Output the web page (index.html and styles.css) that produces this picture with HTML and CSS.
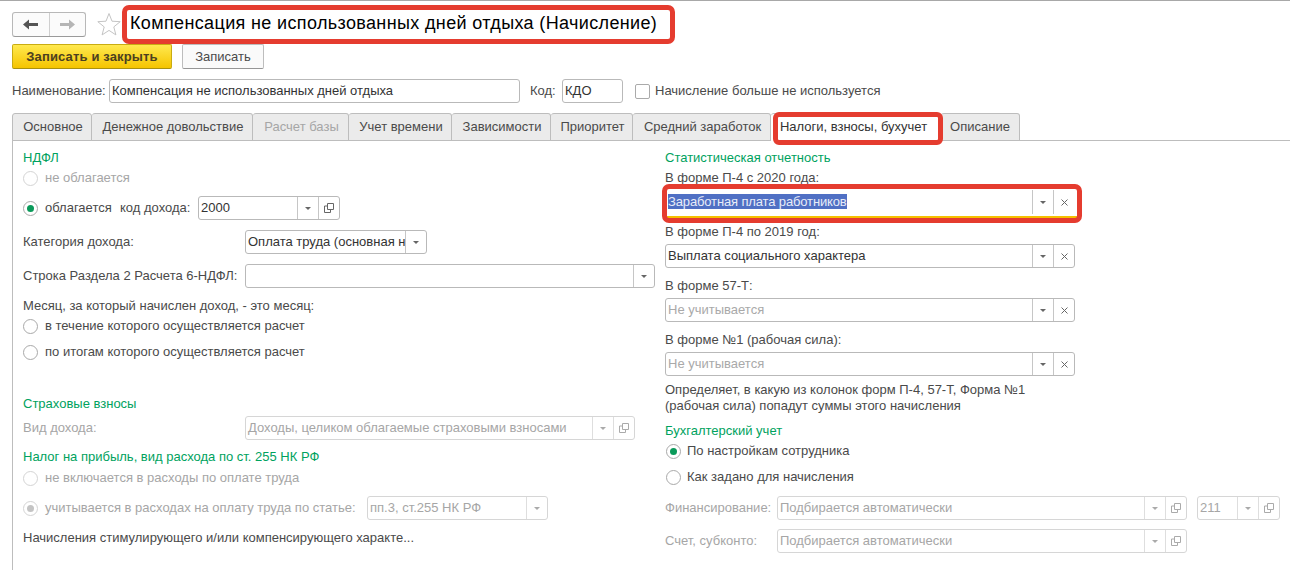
FILE: index.html
```html
<!DOCTYPE html>
<html lang="ru">
<head>
<meta charset="utf-8">
<title>Компенсация не использованных дней отдыха (Начисление)</title>
<link rel="stylesheet" href="styles.css">
</head>
<body>
<svg class="defs" width="0" height="0" aria-hidden="true">
  <symbol id="copy" viewBox="0 0 10 10"><path d="M3.500.5h6v6h-6zM3.500 3H.5v6.500h6V6.500" fill="none" stroke="currentColor"/></symbol>
  <symbol id="tri" viewBox="0 0 6 3"><path d="M0 0h6L3 3z" fill="currentColor"/></symbol>
  <symbol id="close" viewBox="0 0 7 7"><path d="M.5.5l6 6M6.500.5l-6 6" fill="none" stroke="currentColor"/></symbol>
</svg>
<header class="head">
  <div class="nav">
    <span class="nav-btn"><svg width="15" height="11" viewBox="0 0 15 11"><path d="M0 5.500L6 .5v3.500h9v3H6v3.500z" fill="#555"/></svg></span>
    <span class="nav-btn"><svg width="15" height="11" viewBox="0 0 15 11"><path d="M15 5.500L9 .5v3.500H0v3h9v3.500z" fill="#b5b5b5"/></svg></span>
  </div>
  <svg class="star" width="24" height="24" viewBox="0 0 24 24"><path d="M12 1.500l3 7.700 8.200.5-6.400 5.200 2.100 8-6.900-4.500-6.900 4.500 2.100-8L.8 9.700 9 9.200z" fill="#fff" stroke="#c4c4c4"/></svg>
  <h1 class="title">Компенсация не использованных дней отдыха (Начисление)</h1>
</header>
<div class="actions">
  <button class="btn btn-main">Записать и закрыть</button>
  <button class="btn">Записать</button>
</div>
<div class="name-row">
  <span class="lbl lbl-name">Наименование:</span>
  <span class="field f-name"><span class="val">Компенсация не использованных дней отдыха</span></span>
  <span class="lbl lbl-code">Код:</span>
  <span class="field f-code"><span class="val">КДО</span></span>
  <span class="check"></span>
  <span class="lbl">Начисление больше не используется</span>
</div>
<nav class="tabs">
  <span class="tab t1">Основное</span>
  <span class="tab t2">Денежное довольствие</span>
  <span class="tab t3 off">Расчет базы</span>
  <span class="tab t4">Учет времени</span>
  <span class="tab t5">Зависимости</span>
  <span class="tab t6">Приоритет</span>
  <span class="tab t7">Средний заработок</span>
  <span class="tab t8 active">Налоги, взносы, бухучет</span>
  <span class="tab t9">Описание</span>
</nav>
<main class="panel">
  <section class="col col-left">
    <div class="row h20 group">НДФЛ</div>
    <div class="row h20 off"><span class="radio"></span>не облагается</div>
    <div class="row h24 mt8"><span class="radio on"></span><span class="w75">облагается</span><span class="w78">код дохода:</span>
      <span class="field f-income"><span class="val">2000</span><span class="bt"><svg width="6" height="3"><use href="#tri"/></svg></span><span class="bt"><svg width="10" height="10"><use href="#copy"/></svg></span></span>
    </div>
    <div class="row h24 mt10"><span class="lab222">Категория дохода:</span>
      <span class="field f-cat"><span class="val">Оплата труда (основная н</span><span class="bt"><svg width="6" height="3"><use href="#tri"/></svg></span></span>
    </div>
    <div class="row h24 mt10"><span class="lab222">Строка Раздела 2 Расчета 6-НДФЛ:</span>
      <span class="field f-line"><span class="val"></span><span class="bt"><svg width="6" height="3"><use href="#tri"/></svg></span></span>
    </div>
    <div class="row h20 mt8">Месяц, за который начислен доход, - это месяц:</div>
    <div class="row h20"><span class="radio"></span>в течение которого осуществляется расчет</div>
    <div class="row h20 mt6"><span class="radio"></span>по итогам которого осуществляется расчет</div>
    <div class="row h20 mt32 group">Страховые взносы</div>
    <div class="row h24 mt2 off"><span class="lab222">Вид дохода:</span>
      <span class="field f-kind dis"><span class="val">Доходы, целиком облагаемые страховыми взносами</span><span class="bt"><svg width="6" height="3"><use href="#tri"/></svg></span><span class="bt"><svg width="10" height="10"><use href="#copy"/></svg></span></span>
    </div>
    <div class="row h20 mt7 group">Налог на прибыль, вид расхода по ст. 255 НК РФ</div>
    <div class="row h20 mt1 off"><span class="radio"></span>не включается в расходы по оплате труда</div>
    <div class="row h24 mt8 off"><span class="radio on"></span><span class="w322">учитывается в расходах на оплату труда по статье:</span>
      <span class="field f-art dis"><span class="val">пп.3, ст.255 НК РФ</span><span class="bt"><svg width="6" height="3"><use href="#tri"/></svg></span></span>
    </div>
    <div class="row h20 mt8">Начисления стимулирующего и/или компенсирующего характе...</div>
  </section>
  <section class="col col-right">
    <div class="row h20 group">Статистическая отчетность</div>
    <div class="row h20">В форме П-4 с 2020 года:</div>
    <div class="row h24 mt2 hl">
      <span class="field f-stat focus"><span class="val"><span class="sel">Заработная плата работников</span></span><span class="bt"><svg width="6" height="3"><use href="#tri"/></svg></span><span class="bt"><svg width="7" height="7"><use href="#close"/></svg></span></span>
    </div>
    <div class="row h20 mt8">В форме П-4 по 2019 год:</div>
    <div class="row h24 mt2">
      <span class="field f-stat"><span class="val">Выплата социального характера</span><span class="bt"><svg width="6" height="3"><use href="#tri"/></svg></span><span class="bt"><svg width="7" height="7"><use href="#close"/></svg></span></span>
    </div>
    <div class="row h20 mt8">В форме 57-Т:</div>
    <div class="row h24 mt2">
      <span class="field f-stat"><span class="val hint">Не учитывается</span><span class="bt"><svg width="6" height="3"><use href="#tri"/></svg></span><span class="bt"><svg width="7" height="7"><use href="#close"/></svg></span></span>
    </div>
    <div class="row h20 mt8">В форме №1 (рабочая сила):</div>
    <div class="row h24 mt2">
      <span class="field f-stat"><span class="val hint">Не учитывается</span><span class="bt"><svg width="6" height="3"><use href="#tri"/></svg></span><span class="bt"><svg width="7" height="7"><use href="#close"/></svg></span></span>
    </div>
    <div class="row h16 mt6">Определяет, в какую из колонок форм П-4, 57-Т, Форма №1</div>
    <div class="row h16">(рабочая сила) попадут суммы этого начисления</div>
    <div class="row h20 mt7 group">Бухгалтерский учет</div>
    <div class="row h20"><span class="radio on"></span>По настройкам сотрудника</div>
    <div class="row h20 mt6"><span class="radio"></span>Как задано для начисления</div>
    <div class="row h24 mt9 off"><span class="lab112">Финансирование:</span>
      <span class="field f-fin dis"><span class="val">Подбирается автоматически</span><span class="bt"><svg width="6" height="3"><use href="#tri"/></svg></span><span class="bt"><svg width="10" height="10"><use href="#copy"/></svg></span></span>
      <span class="field f-num dis"><span class="val">211</span><span class="bt"><svg width="6" height="3"><use href="#tri"/></svg></span><span class="bt"><svg width="10" height="10"><use href="#copy"/></svg></span></span>
    </div>
    <div class="row h24 mt9 off"><span class="lab112">Счет, субконто:</span>
      <span class="field f-fin dis"><span class="val">Подбирается автоматически</span><span class="bt"><svg width="6" height="3"><use href="#tri"/></svg></span><span class="bt"><svg width="10" height="10"><use href="#copy"/></svg></span></span>
    </div>
  </section>
</main>
</body>
</html>
```
FILE: styles.css
```css
*, *::after { box-sizing: border-box; }
html, body { margin: 0; height: 570px; overflow: hidden; }
body {
  width: 1290px;
  background: #fff;
  border-top: 1px solid #a8a8a8;
  font: 13px/16px "Liberation Sans", Arial, sans-serif;
  color: #4a4a4a;
}
.defs { position: absolute; }

.head { display: flex; align-items: center; height: 42px; padding: 4px 0 0 12px; }
.nav { display: flex; width: 74px; height: 25px; border: 1px solid #b8b8b8; border-bottom-color: #9a9a9a; border-radius: 3px; background: #fbfbfb; }
.nav-btn { flex: 1; display: flex; align-items: center; justify-content: center; }
.nav-btn + .nav-btn { border-left: 1px solid #cfcfcf; }
.star { margin-left: 11px; }
.title {
  position: relative;
  margin: 0 0 0 1px;
  width: 553px;
  height: 39px;
  padding-left: 3px;
  border: 5px solid #e53c2f;
  border-radius: 7px;
  font-weight: 400;
  font-size: 18px;
  letter-spacing: .36px;
  line-height: 27px;
  color: #000;
  white-space: nowrap;
}

.actions { display: flex; gap: 10px; padding: 1px 0 0 12px; height: 36px; }
.btn { height: 25px; width: 82px; padding: 0; border: 1px solid #bdbdbd; border-bottom-color: #969696; border-radius: 2px; background: #fafafa; font: inherit; color: #4a4a4a; }
.btn-main { width: 160px; border-color: #c9ac12; border-bottom-color: #a99110; background: linear-gradient(#ffe94f, #f5c400); font-weight: 700; letter-spacing: .15px; color: #4b4020; }

.name-row { display: flex; align-items: center; height: 24px; padding-left: 12px; }
.name-row .lbl { white-space: nowrap; }
.lbl-name { width: 97px; }
.f-name { width: 411px; }
.lbl-code { width: 32px; margin-left: 10px; }
.f-code { width: 61px; }
.check { width: 15px; height: 15px; margin: 0 5px 0 12px; border: 1px solid #aaa; border-radius: 2px; }

.field { display: flex; height: 24px; border: 1px solid #b9b9b9; border-radius: 3px; background: #fff; color: #333; overflow: hidden; }
.val { flex: 1; min-width: 0; padding-left: 2px; line-height: 22px; white-space: nowrap; overflow: hidden; }
.bt { flex: none; display: flex; align-items: center; justify-content: center; width: 21px; border-left: 1px solid #c6c6c6; color: #666; }
.hint { color: #a9a9a9; }
.dis { border-color: #d6d6d6; color: #a6a6a6; }
.dis .bt { border-left-color: #dedede; color: #aaa; }

.tabs { display: flex; height: 28px; margin-top: 10px; padding-left: 12px; }
.tab { display: flex; align-items: center; justify-content: center; height: 28px; padding-left: 2px; border: 1px solid #bdbdbd; border-left-width: 0; border-radius: 3px 3px 0 0; background: #ebebeb; white-space: nowrap; }
.t1 { width: 80px; border-left-width: 1px; }
.t2 { width: 161px; }
.t3 { width: 96px; }
.t4 { width: 103px; }
.t5 { width: 99px; }
.t6 { width: 82px; }
.t7 { width: 138px; }
.t8 { width: 170px; padding: 0 4px 0 0; }
.t9 { width: 79px; padding: 0; }
.off, .tab.off { color: #a6a6a6; }
.active { position: relative; background: #fff; border-bottom-color: #fff; color: #333; }
.active::after { content: ""; position: absolute; left: 2px; top: -2px; width: 170px; height: 33px; border: 5px solid #e53c2f; border-radius: 6px; }

.panel { display: flex; gap: 10px; height: 440px; margin: -1px 0 0 12px; padding: 7px 0 0 9px; border-top: 1px solid #bdbdbd; border-left: 1px solid #bdbdbd; }
.col-left { width: 633px; padding-left: 1px; }
.col-right { width: 615px; }
.row { display: flex; align-items: center; white-space: nowrap; }
.h16 { height: 16px; }
.h20 { height: 20px; }
.h24 { height: 24px; }
.mt1 { margin-top: 1px; }
.mt2 { margin-top: 2px; }
.mt6 { margin-top: 6px; }
.mt7 { margin-top: 7px; }
.mt8 { margin-top: 8px; }
.mt9 { margin-top: 9px; }
.mt10 { margin-top: 10px; }
.mt32 { margin-top: 32px; }
.group { color: #00a25e; }

.radio { flex: none; position: relative; width: 15px; height: 15px; margin: 0 6px 0 1px; border: 1px solid #a9a9a9; border-radius: 50%; background: #fff; }
.col-left .radio { margin-left: 0; margin-right: 7px; }
.off .radio { border-color: #d4d4d4; }
.radio.on::after { content: ""; position: absolute; left: 3px; top: 3px; width: 7px; height: 7px; border-radius: 50%; background: #0a9a5a; }
.off .radio.on::after { background: #c4c4c4; }

.w75 { width: 75px; }
.w78 { width: 78px; }
.w322 { width: 322px; }
.lab222 { width: 222px; }
.lab112 { width: 112px; }
.f-income { width: 142px; }
.f-cat { width: 182px; }
.f-line { width: 410px; }
.f-kind { width: 390px; }
.f-art { width: 181px; }
.f-stat { width: 410px; }
.f-fin { width: 410px; }
.f-num { width: 83px; margin-left: 10px; }

.hl { position: relative; align-items: flex-start; }
.hl::after { content: ""; position: absolute; left: -3px; top: -6px; width: 420px; height: 39px; border: 5px solid #e53c2f; border-radius: 7px; }
.focus { flex: none; width: 412px; height: 28px; margin-left: 1px; padding-right: 4px; border: 0; border-bottom: 2px solid #f5c000; border-radius: 0; }
.focus .val { padding-left: 2px; height: 24px; line-height: 24px; }
.focus .bt { height: 24px; }
.sel { background: #5070c4; color: #e8ecf8; letter-spacing: -.14px; }
```
